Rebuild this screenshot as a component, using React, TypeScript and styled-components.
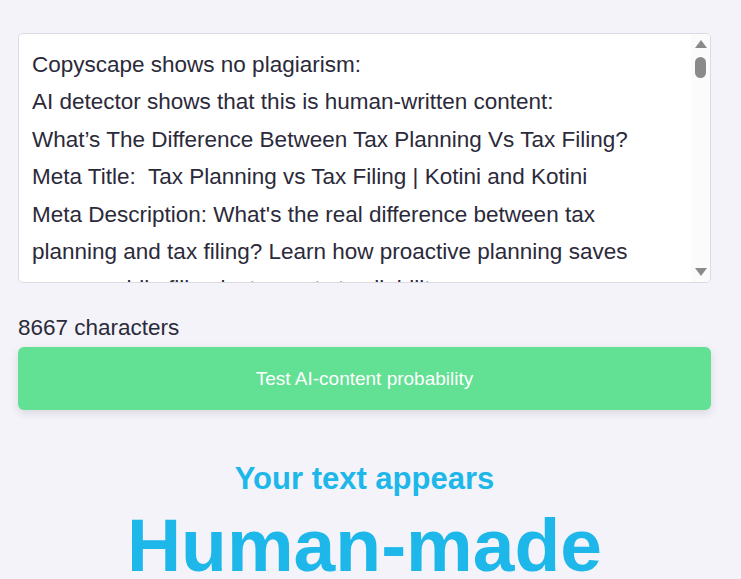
import React from "react";
import styled, { createGlobalStyle } from "styled-components";

const Global = createGlobalStyle`
  html, body { margin: 0; padding: 0; background: #f4f3f9; }
  body { font-family: "Liberation Sans", Arial, sans-serif; color: #2b2a3a; overflow: hidden; }
`;

const Page = styled.main`
  width: 693px;
  margin-left: 18px;
  padding-top: 33px;
  display: flex;
  flex-direction: column;
`;

const TextBox = styled.div`
  height: 248px;
  background: #fff;
  border: 1px solid #dcdbe3;
  border-radius: 5px;
  display: flex;
  overflow: hidden;
`;

const TextContent = styled.div`
  flex: 1;
  padding: 12px 14px 0 13px;
  font-size: 22.5px;
  line-height: 37.4px;
  color: #2b2a3a;
  overflow: hidden;
  white-space: pre-wrap;
`;

const Line = styled.p`
  margin: 0;
`;

const Scrollbar = styled.div`
  width: 19px;
  flex: none;
  background: #fbfbfb;
  display: flex;
  flex-direction: column;
  align-items: center;
  padding: 6px 0 6px;
  box-sizing: border-box;
`;

const Arrow = styled.div<{ $down?: boolean }>`
  width: 0;
  height: 0;
  border-left: 6.5px solid transparent;
  border-right: 6.5px solid transparent;
  ${(p) => (p.$down ? "border-top: 8px solid #8a8a8a;" : "border-bottom: 8px solid #8a8a8a;")}
`;

const Thumb = styled.div`
  width: 11px;
  height: 21px;
  border-radius: 5.5px;
  background: #8a8a8a;
  margin-top: 9px;
`;

const Spacer = styled.div`
  flex: 1;
`;

const Count = styled.div`
  margin-top: 32px;
  font-size: 22.5px;
  line-height: 26px;
  color: #2b2a3a;
`;

const TestButton = styled.button`
  margin-top: 6px;
  height: 63px;
  border: none;
  border-radius: 6px;
  background: #62e093;
  color: #fff;
  font-family: "Liberation Sans", Arial, sans-serif;
  font-size: 19px;
  box-shadow: 0 3px 8px rgba(60, 60, 90, 0.15);
  cursor: pointer;
`;

const Result = styled.section`
  margin-top: 51px;
  text-align: center;
  color: #1db7ea;
  font-weight: bold;
`;

const Lead = styled.div`
  font-size: 31px;
  line-height: 36px;
`;

const Verdict = styled.div`
  font-size: 75px;
  line-height: 84px;
  margin-top: 6px;
`;

const lines = [
  "Copyscape shows no plagiarism:",
  "AI detector shows that this is human-written content:",
  "What\u2019s The Difference Between Tax Planning Vs Tax Filing?",
  "Meta Title:  Tax Planning vs Tax Filing | Kotini and Kotini",
  "Meta Description: What's the real difference between tax",
  "planning and tax filing? Learn how proactive planning saves",
  "money, while filing just reports tax liability.",
];

export default function App() {
  return (
    <>
      <Global />
      <Page>
        <TextBox>
          <TextContent>
            {lines.map((l, i) => (
              <Line key={i}>{l}</Line>
            ))}
          </TextContent>
          <Scrollbar>
            <Arrow />
            <Thumb />
            <Spacer />
            <Arrow $down />
          </Scrollbar>
        </TextBox>
        <Count>8667 characters</Count>
        <TestButton>Test AI-content probability</TestButton>
        <Result>
          <Lead>Your text appears</Lead>
          <Verdict>Human-made</Verdict>
        </Result>
      </Page>
    </>
  );
}
